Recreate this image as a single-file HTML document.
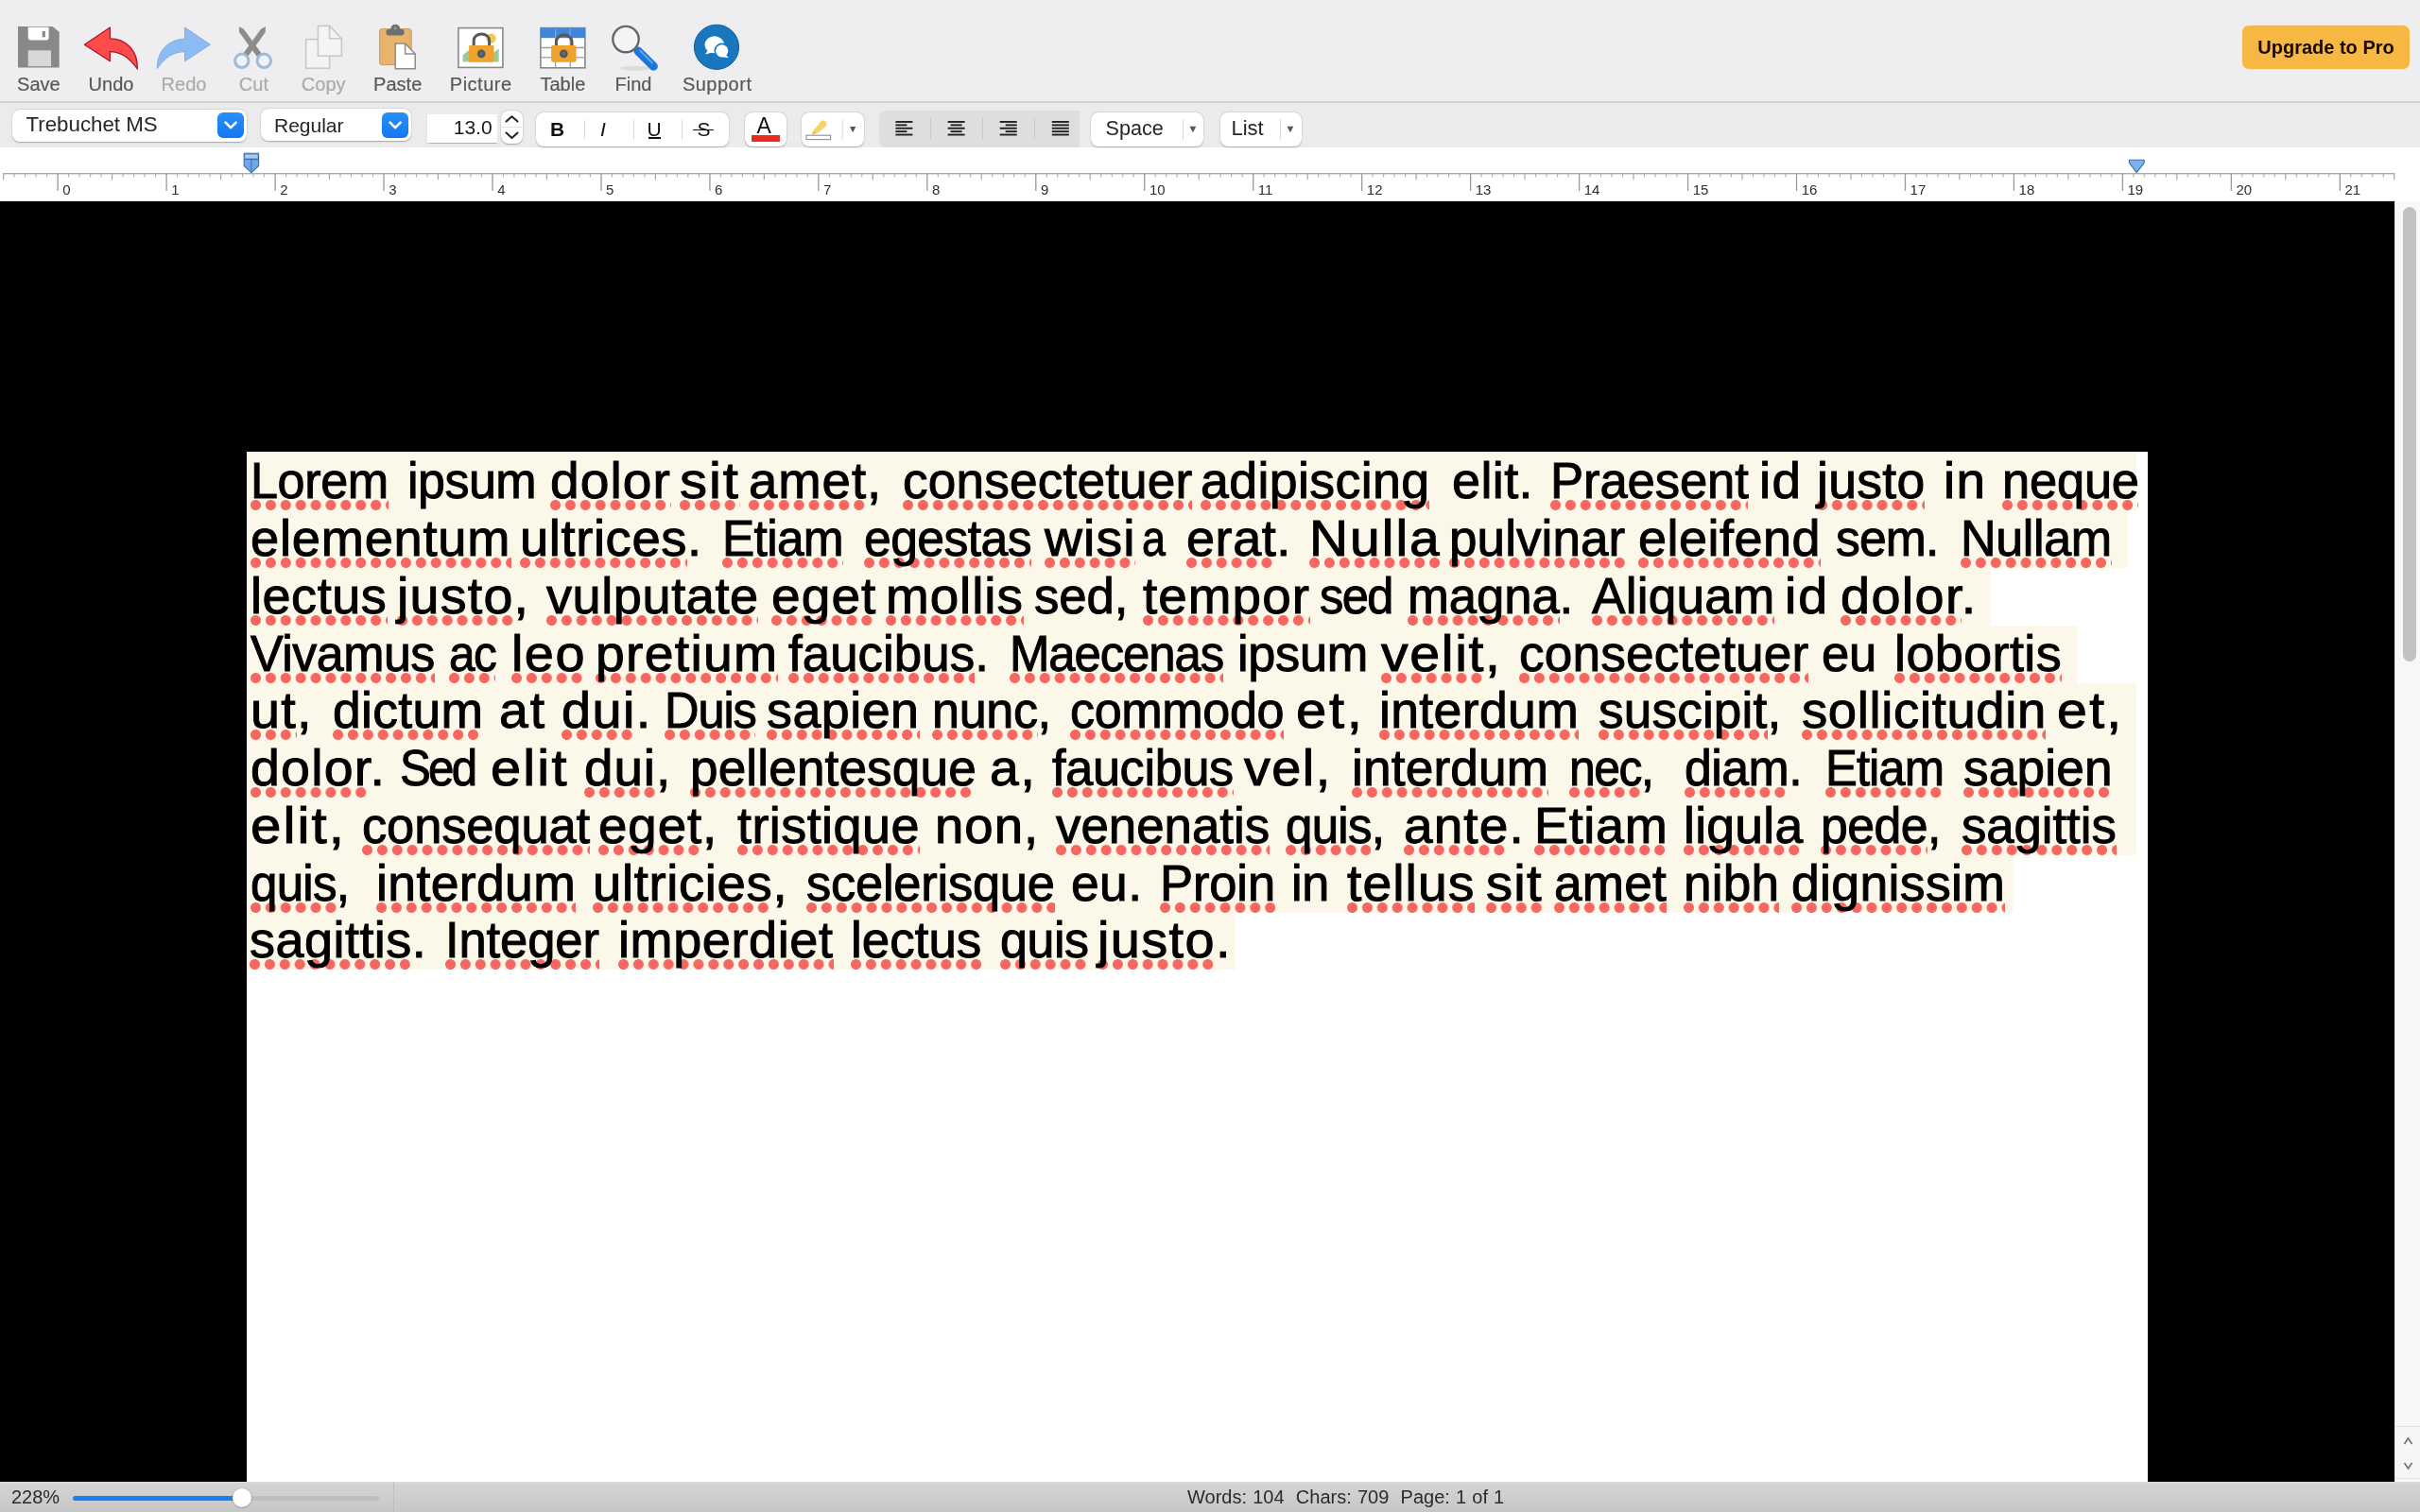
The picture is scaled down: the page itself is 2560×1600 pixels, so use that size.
<!DOCTYPE html>
<html><head><meta charset="utf-8">
<style>
*{box-sizing:border-box;margin:0;padding:0}
html,body{width:2560px;height:1600px;overflow:hidden;background:#000;font-family:"Liberation Sans",sans-serif;position:relative}
.abs{position:absolute}
#tb{position:absolute;left:0;top:0;width:2560px;height:107px;background:#EEEEF0}
#tbsep{position:absolute;left:0;top:107px;width:2560px;height:1.5px;background:#D2D2D4}
#fb{position:absolute;left:0;top:108.5px;width:2560px;height:47.5px;background:#EBEBEB}
#ruler{position:absolute;left:0;top:156px;width:2560px;height:57px;background:#fff}
#doc{position:absolute;left:0;top:213px;width:2533px;height:1355px;background:#000}
#page{position:absolute;left:261px;top:478px;width:2011px;height:1090px;background:#fff}
.hl{position:absolute;left:262px;height:60.78px;background:#FBF7E9}
.ln{position:absolute;left:0;width:2560px;height:61px;white-space:nowrap;font-size:52.8px;line-height:60.78px;color:#000;-webkit-text-stroke:1.0px #000}
.ln .m{position:relative}
.ln .m::after{content:"";position:absolute;left:0;right:0;top:50px;height:11px;mix-blend-mode:multiply;background:radial-gradient(circle at 5.5px 5.5px,#F96A68 0,#F96A68 5px,rgba(249,106,104,0) 5.9px) repeat-x 0 0;background-size:15.9px 11px}
#sb{position:absolute;left:2533px;top:213px;width:27px;height:1355px;background:#F8F8F8;border-left:1px solid #E4E4E4}
#sbthumb{position:absolute;left:7.5px;top:6px;width:14px;height:481px;border-radius:7px;background:#C2C2C2}
#sbarrows{position:absolute;left:0;top:1296px;width:26px;height:56px;border-top:1px solid #E2E2E2;border-bottom:1px solid #E2E2E2;background:#F6F6F6}
#status{position:absolute;left:0;top:1568px;width:2560px;height:32px;background:linear-gradient(#DCDCDC 0,#D3D3D3 3px,#C8C7C8 100%)}
.lbl{position:absolute;top:77px;font-size:20px;color:#585858;-webkit-text-stroke:0.2px currentColor;text-align:center;width:120px;line-height:24px;white-space:nowrap}
.dis{color:#ABABAB}
.pop{position:absolute;background:#fff;border-radius:8px;box-shadow:0 0.5px 1.5px rgba(0,0,0,0.28),0 0 0 0.5px rgba(0,0,0,0.06)}
.bbtn{position:absolute;border-radius:6px;background:linear-gradient(#2A8FF9,#1377F0)}
.ptxt{position:absolute;font-size:21px;color:#262626;white-space:nowrap;line-height:24px}
.div{position:absolute;width:1px;background:#D9D9D9}
.w{position:absolute;top:0}
.w{transform-origin:0 0}
.dots{position:absolute;top:50px;height:11px;mix-blend-mode:multiply;background:radial-gradient(circle at 5.5px 5.5px,#F96A68 0,#F96A68 5px,rgba(249,106,104,0) 5.9px) repeat-x 0 0;background-size:15.9px 11px}

</style></head><body>
<div id="tb"></div>
<div id="tbsep"></div>
<div id="fb"></div>
<div id="ruler"></div>
<div id="doc"></div>
<div id="page"></div>
<div class="hl" style="top:479.40px;width:1998.0px"></div><div class="hl" style="top:540.18px;width:1989.0px"></div><div class="hl" style="top:600.96px;width:1844.0px"></div><div class="hl" style="top:661.74px;width:1935.6px"></div><div class="hl" style="top:722.52px;width:1998.0px"></div><div class="hl" style="top:783.30px;width:1998.0px"></div><div class="hl" style="top:844.08px;width:1998.0px"></div><div class="hl" style="top:904.86px;width:1867.6px"></div><div class="hl" style="top:965.64px;width:1044.6px"></div><div class="ln" style="top:479.22px"><span class="w" style="left:265.4px;transform:scaleX(0.9870);letter-spacing:-0.39px">Lorem</span><i class="dots" style="left:265.4px;width:145.8px"></i><span class="w" style="left:430.5px;transform:scaleX(0.9847);letter-spacing:-0.52px">ipsum</span><span class="w" style="left:582.3px;transform:scaleX(1.0437);letter-spacing:1.03px">dolor</span><i class="dots" style="left:582.3px;width:127.9px"></i><span class="w" style="left:719.2px;transform:scaleX(1.1000);letter-spacing:1.76px">sit</span><i class="dots" style="left:719.2px;width:63.9px"></i><span class="w" style="left:792.0px;transform:scaleX(1.0319);letter-spacing:0.94px">amet,</span><i class="dots" style="left:792.0px;width:125.0px"></i><span class="w" style="left:954.5px;transform:scaleX(1.0069);letter-spacing:0.17px">consectetuer</span><i class="dots" style="left:954.5px;width:306.5px"></i><span class="w" style="left:1270.0px;transform:scaleX(1.0160);letter-spacing:0.38px">adipiscing</span><i class="dots" style="left:1270.0px;width:242.4px"></i><span class="w" style="left:1535.7px;transform:scaleX(1.0215);letter-spacing:0.41px">elit.</span><span class="w" style="left:1639.5px;transform:scaleX(0.9961);letter-spacing:-0.10px">Praesent</span><i class="dots" style="left:1639.5px;width:209.7px"></i><span class="w" style="left:1861.3px;transform:scaleX(1.0379);letter-spacing:1.32px">id</span><span class="w" style="left:1921.6px;transform:scaleX(1.0137);letter-spacing:0.30px">justo</span><i class="dots" style="left:1921.6px;width:114.6px"></i><span class="w" style="left:2055.9px;transform:scaleX(1.0379);letter-spacing:1.32px">in</span><span class="w" style="left:2117.7px;transform:scaleX(0.9931);letter-spacing:-0.20px">neque</span><i class="dots" style="left:2117.7px;width:144.8px"></i></div><div class="ln" style="top:540.00px"><span class="w" style="left:265.4px;transform:scaleX(1.0265);letter-spacing:0.77px">elementum</span><i class="dots" style="left:265.4px;width:275.2px"></i><span class="w" style="left:549.6px;transform:scaleX(1.0288);letter-spacing:0.60px">ultrices.</span><i class="dots" style="left:549.6px;width:177.0px"></i><span class="w" style="left:763.8px;transform:scaleX(0.9735);letter-spacing:-0.72px">Etiam</span><i class="dots" style="left:763.8px;width:127.9px"></i><span class="w" style="left:914.4px;transform:scaleX(0.9783);letter-spacing:-0.57px">egestas</span><i class="dots" style="left:914.4px;width:177.0px"></i><span class="w" style="left:1104.8px;transform:scaleX(1.0483);letter-spacing:1.06px">wisi</span><i class="dots" style="left:1104.8px;width:96.7px"></i><span class="w" style="left:1208.4px;transform:scaleX(0.8500);letter-spacing:0.00px">a</span><span class="w" style="left:1255.0px;transform:scaleX(1.0234);letter-spacing:0.53px">erat.</span><i class="dots" style="left:1255.0px;width:95.3px"></i><span class="w" style="left:1384.5px;transform:scaleX(1.0779);letter-spacing:1.87px">Nulla</span><i class="dots" style="left:1384.5px;width:139.8px"></i><span class="w" style="left:1533.2px;transform:scaleX(1.0038);letter-spacing:0.09px">pulvinar</span><i class="dots" style="left:1533.2px;width:186.3px"></i><span class="w" style="left:1733.0px;transform:scaleX(1.0218);letter-spacing:0.50px">eleifend</span><i class="dots" style="left:1733.0px;width:193.1px"></i><span class="w" style="left:1941.7px;transform:scaleX(0.9773);letter-spacing:-0.83px">sem.</span><span class="w" style="left:2074.0px;transform:scaleX(0.9862);letter-spacing:-0.38px">Nullam</span><i class="dots" style="left:2074.0px;width:159.8px"></i></div><div class="ln" style="top:600.78px"><span class="w" style="left:265.4px;transform:scaleX(1.0229);letter-spacing:0.53px">lectus</span><i class="dots" style="left:265.4px;width:144.3px"></i><span class="w" style="left:420.1px;transform:scaleX(1.0523);letter-spacing:1.17px">justo,</span><i class="dots" style="left:420.1px;width:123.5px"></i><span class="w" style="left:577.8px;transform:scaleX(1.0240);letter-spacing:0.57px">vulputate</span><i class="dots" style="left:577.8px;width:224.7px"></i><span class="w" style="left:815.9px;transform:scaleX(1.0416);letter-spacing:1.07px">eget</span><i class="dots" style="left:815.9px;width:111.5px"></i><span class="w" style="left:937.2px;transform:scaleX(1.0395);letter-spacing:0.89px">mollis</span><i class="dots" style="left:937.2px;width:145.8px"></i><span class="w" style="left:1093.9px;transform:scaleX(0.9984);letter-spacing:-0.05px">sed,</span><span class="w" style="left:1209.4px;transform:scaleX(1.0381);letter-spacing:1.04px">tempor</span><i class="dots" style="left:1209.4px;width:177.1px"></i><span class="w" style="left:1395.9px;transform:scaleX(0.9584);letter-spacing:-1.69px">sed</span><span class="w" style="left:1489.1px;transform:scaleX(0.9974);letter-spacing:-0.08px">magna.</span><i class="dots" style="left:1489.1px;width:160.6px"></i><span class="w" style="left:1683.9px;transform:scaleX(1.0069);letter-spacing:0.19px">Aliquam</span><i class="dots" style="left:1683.9px;width:193.4px"></i><span class="w" style="left:1887.7px;transform:scaleX(1.0502);letter-spacing:1.76px">id</span><span class="w" style="left:1947.2px;transform:scaleX(1.0569);letter-spacing:1.30px">dolor.</span><i class="dots" style="left:1947.2px;width:127.9px"></i></div><div class="ln" style="top:661.56px"><span class="w" style="left:265.4px;transform:scaleX(0.9835);letter-spacing:-0.48px">Vivamus</span><i class="dots" style="left:265.4px;width:194.9px"></i><span class="w" style="left:475.2px;transform:scaleX(0.9383);letter-spacing:-1.72px">ac</span><i class="dots" style="left:475.2px;width:49.1px"></i><span class="w" style="left:540.6px;transform:scaleX(1.0581);letter-spacing:1.37px">leo</span><i class="dots" style="left:540.6px;width:78.9px"></i><span class="w" style="left:629.9px;transform:scaleX(1.0481);letter-spacing:1.21px">pretium</span><i class="dots" style="left:629.9px;width:193.4px"></i><span class="w" style="left:833.7px;transform:scaleX(1.0014);letter-spacing:0.03px">faucibus.</span><i class="dots" style="left:833.7px;width:197.2px"></i><span class="w" style="left:1068.1px;transform:scaleX(0.9634);letter-spacing:-1.11px">Maecenas</span><i class="dots" style="left:1068.1px;width:226.1px"></i><span class="w" style="left:1309.0px;transform:scaleX(0.9907);letter-spacing:-0.31px">ipsum</span><span class="w" style="left:1460.9px;transform:scaleX(1.0829);letter-spacing:1.56px">velit,</span><i class="dots" style="left:1460.9px;width:110.1px"></i><span class="w" style="left:1606.5px;transform:scaleX(1.0069);letter-spacing:0.17px">consectetuer</span><i class="dots" style="left:1606.5px;width:306.5px"></i><span class="w" style="left:1927.3px;transform:scaleX(0.9963);letter-spacing:-0.20px">eu</span><span class="w" style="left:2003.7px;transform:scaleX(1.0201);letter-spacing:0.43px">lobortis</span><i class="dots" style="left:2003.7px;width:177.1px"></i></div><div class="ln" style="top:722.34px"><span class="w" style="left:265.4px;transform:scaleX(1.0558);letter-spacing:1.23px">ut,</span><i class="dots" style="left:265.4px;width:49.1px"></i><span class="w" style="left:351.7px;transform:scaleX(1.0118);letter-spacing:0.31px">dictum</span><i class="dots" style="left:351.7px;width:159.2px"></i><span class="w" style="left:528.2px;transform:scaleX(1.0477);letter-spacing:2.00px">at</span><span class="w" style="left:594.2px;transform:scaleX(1.0575);letter-spacing:1.35px">dui.</span><i class="dots" style="left:594.2px;width:78.8px"></i><span class="w" style="left:702.8px;transform:scaleX(0.9568);letter-spacing:-1.14px">Duis</span><i class="dots" style="left:702.8px;width:96.7px"></i><span class="w" style="left:811.4px;transform:scaleX(1.0188);letter-spacing:0.49px">sapien</span><i class="dots" style="left:811.4px;width:161.5px"></i><span class="w" style="left:986.3px;transform:scaleX(0.9873);letter-spacing:-0.36px">nunc,</span><i class="dots" style="left:986.3px;width:111.6px"></i><span class="w" style="left:1132.1px;transform:scaleX(0.9876);letter-spacing:-0.41px">commodo</span><i class="dots" style="left:1132.1px;width:226.1px"></i><span class="w" style="left:1371.1px;transform:scaleX(1.0954);letter-spacing:2.48px">et,</span><span class="w" style="left:1459.4px;transform:scaleX(1.0137);letter-spacing:0.35px">interdum</span><i class="dots" style="left:1459.4px;width:211.1px"></i><span class="w" style="left:1691.3px;transform:scaleX(1.0069);letter-spacing:0.15px">suscipit,</span><i class="dots" style="left:1691.3px;width:178.5px"></i><span class="w" style="left:1905.5px;transform:scaleX(1.0310);letter-spacing:0.63px">sollicitudin</span><i class="dots" style="left:1905.5px;width:258.9px"></i><span class="w" style="left:2175.8px;transform:scaleX(1.0831);letter-spacing:2.16px">et,</span></div><div class="ln" style="top:783.12px"><span class="w" style="left:265.4px;transform:scaleX(1.0511);letter-spacing:1.17px">dolor.</span><i class="dots" style="left:265.4px;width:126.5px"></i><span class="w" style="left:422.6px;transform:scaleX(0.9326);letter-spacing:-3.00px">Sed</span><span class="w" style="left:519.3px;transform:scaleX(1.0927);letter-spacing:2.04px">elit</span><span class="w" style="left:618.0px;transform:scaleX(1.0378);letter-spacing:0.89px">dui,</span><i class="dots" style="left:618.0px;width:75.9px"></i><span class="w" style="left:729.6px;transform:scaleX(1.0056);letter-spacing:0.14px">pellentesque</span><i class="dots" style="left:729.6px;width:302.8px"></i><span class="w" style="left:1046.8px;transform:scaleX(1.0463);letter-spacing:1.76px">a,</span><span class="w" style="left:1112.7px;transform:scaleX(0.9878);letter-spacing:-0.30px">faucibus</span><i class="dots" style="left:1112.7px;width:191.9px"></i><span class="w" style="left:1316.0px;transform:scaleX(1.0549);letter-spacing:1.43px">vel,</span><span class="w" style="left:1429.6px;transform:scaleX(1.0067);letter-spacing:0.17px">interdum</span><i class="dots" style="left:1429.6px;width:208.2px"></i><span class="w" style="left:1660.1px;transform:scaleX(0.9443);letter-spacing:-1.58px">nec,</span><i class="dots" style="left:1660.1px;width:75.9px"></i><span class="w" style="left:1782.0px;transform:scaleX(0.9813);letter-spacing:-0.53px">diam.</span><i class="dots" style="left:1782.0px;width:110.2px"></i><span class="w" style="left:1930.8px;transform:scaleX(0.9624);letter-spacing:-1.02px">Etiam</span><i class="dots" style="left:1930.8px;width:125.0px"></i><span class="w" style="left:2076.6px;transform:scaleX(1.0067);letter-spacing:0.17px">sapien</span><i class="dots" style="left:2076.6px;width:157.7px"></i></div><div class="ln" style="top:843.90px"><span class="w" style="left:264.9px;transform:scaleX(1.1014);letter-spacing:1.93px">elit,</span><span class="w" style="left:383.0px;transform:scaleX(0.9945);letter-spacing:-0.15px">consequat</span><i class="dots" style="left:383.0px;width:241.0px"></i><span class="w" style="left:632.9px;transform:scaleX(1.0351);letter-spacing:0.90px">eget,</span><i class="dots" style="left:632.9px;width:110.1px"></i><span class="w" style="left:780.1px;transform:scaleX(1.0212);letter-spacing:0.44px">tristique</span><i class="dots" style="left:780.1px;width:192.8px"></i><span class="w" style="left:989.2px;transform:scaleX(1.0321);letter-spacing:1.02px">non,</span><span class="w" style="left:1117.2px;transform:scaleX(1.0002);letter-spacing:0.00px">venenatis</span><i class="dots" style="left:1117.2px;width:226.1px"></i><span class="w" style="left:1359.7px;transform:scaleX(0.9677);letter-spacing:-0.78px">quis,</span><i class="dots" style="left:1359.7px;width:90.7px"></i><span class="w" style="left:1484.6px;transform:scaleX(1.0412);letter-spacing:1.06px">ante.</span><i class="dots" style="left:1484.6px;width:111.4px"></i><span class="w" style="left:1622.9px;transform:scaleX(1.0232);letter-spacing:0.63px">Etiam</span><i class="dots" style="left:1622.9px;width:141.3px"></i><span class="w" style="left:1780.6px;transform:scaleX(1.0126);letter-spacing:0.26px">ligula</span><i class="dots" style="left:1780.6px;width:126.4px"></i><span class="w" style="left:1926.4px;transform:scaleX(0.9809);letter-spacing:-0.56px">pede,</span><i class="dots" style="left:1926.4px;width:113.0px"></i><span class="w" style="left:2075.1px;transform:scaleX(0.9981);letter-spacing:-0.04px">sagittis</span><i class="dots" style="left:2075.1px;width:163.7px"></i></div><div class="ln" style="top:904.68px"><span class="w" style="left:265.4px;transform:scaleX(0.9682);letter-spacing:-0.77px">quis,</span><i class="dots" style="left:265.4px;width:90.8px"></i><span class="w" style="left:397.8px;transform:scaleX(1.0140);letter-spacing:0.36px">interdum</span><i class="dots" style="left:397.8px;width:211.2px"></i><span class="w" style="left:626.9px;transform:scaleX(1.0314);letter-spacing:0.63px">ultricies,</span><i class="dots" style="left:626.9px;width:190.4px"></i><span class="w" style="left:853.0px;transform:scaleX(0.9918);letter-spacing:-0.20px">scelerisque</span><i class="dots" style="left:853.0px;width:262.7px"></i><span class="w" style="left:1133.0px;transform:scaleX(1.0111);letter-spacing:0.37px">eu.</span><span class="w" style="left:1227.3px;transform:scaleX(0.9949);letter-spacing:-0.13px">Proin</span><i class="dots" style="left:1227.3px;width:122.0px"></i><span class="w" style="left:1365.6px;transform:scaleX(0.9885);letter-spacing:-0.40px">in</span><span class="w" style="left:1425.1px;transform:scaleX(1.0481);letter-spacing:0.99px">tellus</span><i class="dots" style="left:1425.1px;width:135.4px"></i><span class="w" style="left:1572.0px;transform:scaleX(1.0641);letter-spacing:1.13px">sit</span><i class="dots" style="left:1572.0px;width:59.8px"></i><span class="w" style="left:1643.7px;transform:scaleX(1.0068);letter-spacing:0.20px">amet</span><i class="dots" style="left:1643.7px;width:119.0px"></i><span class="w" style="left:1780.6px;transform:scaleX(1.0064);letter-spacing:0.16px">nibh</span><i class="dots" style="left:1780.6px;width:101.1px"></i><span class="w" style="left:1895.1px;transform:scaleX(1.0138);letter-spacing:0.34px">dignissim</span><i class="dots" style="left:1895.1px;width:226.2px"></i></div><div class="ln" style="top:965.46px"><span class="w" style="left:263.9px;transform:scaleX(1.0225);letter-spacing:0.46px">sagittis.</span><i class="dots" style="left:263.9px;width:171.8px"></i><span class="w" style="left:471.4px;transform:scaleX(0.9955);letter-spacing:-0.11px">Integer</span><i class="dots" style="left:471.4px;width:162.9px"></i><span class="w" style="left:654.4px;transform:scaleX(1.0238);letter-spacing:0.57px">imperdiet</span><i class="dots" style="left:654.4px;width:227.6px"></i><span class="w" style="left:899.8px;transform:scaleX(1.0014);letter-spacing:0.03px">lectus</span><i class="dots" style="left:899.8px;width:138.3px"></i><span class="w" style="left:1058.2px;transform:scaleX(0.9836);letter-spacing:-0.40px">quis</span><i class="dots" style="left:1058.2px;width:93.7px"></i><span class="w" style="left:1160.8px;transform:scaleX(1.0587);letter-spacing:1.31px">justo.</span><i class="dots" style="left:1160.8px;width:125.0px"></i></div>
<svg class="abs" style="left:0;top:0" width="820" height="107" viewBox="0 0 820 107">
 <!-- Save -->
 <path d="M19,28 H55.7 L62.7,34 V71.5 H19 Z" fill="#898989"/>
 <path d="M29.7,28.7 H51.6 V39.6 Q51.6,42.6 48.6,42.6 H32.7 Q29.7,42.6 29.7,39.6 Z" fill="#fff"/>
 <rect x="44.7" y="33" width="3.2" height="6.4" fill="#898989"/>
 <rect x="29.7" y="53.3" width="24.3" height="16.9" fill="#D8D8D8"/>
 <!-- Undo -->
 <path d="M89.4,47.2 L116.4,29 L116.4,40.8 C133,41 146,53 145.3,73 C137,61 128,54.7 116.4,54.7 L116.4,64.8 Z" fill="#FF4B4B" stroke="#A8182A" stroke-width="1.3" stroke-linejoin="round"/>
 <!-- Redo -->
 <path d="M222.4,47.2 L195.5,29 L195.5,41.2 C179,41.4 166,53 166.3,72.6 C174,61 183.5,54.7 195.5,54.7 L195.5,64.8 Z" fill="#8DBCF2" stroke="#80AEE2" stroke-width="1" stroke-linejoin="round"/>
 <!-- Cut -->
 <path d="M252.8,28.2 L257.6,30.6 L277.6,57.8 L272.8,61.2 L253.2,34.2 Z" fill="#8C8C8C"/>
 <path d="M281,28.2 L276.2,30.6 L256.4,57.8 L261.2,61.2 L280.6,34.2 Z" fill="#8C8C8C"/>
 <circle cx="255.8" cy="64.3" r="7.2" fill="#F2F2F4" stroke="#9EBBDA" stroke-width="3"/>
 <circle cx="279.3" cy="64.3" r="7.2" fill="#F2F2F4" stroke="#9EBBDA" stroke-width="3"/>
 <!-- Copy -->
 <rect x="323.6" y="41.6" width="25" height="30.6" fill="#F4F4F5" stroke="#C8C8C8" stroke-width="1.6"/>
 <path d="M336.4,27.4 H348.6 L361.4,40.8 V59.3 H336.4 Z" fill="#F4F4F5" stroke="#C8C8C8" stroke-width="1.6" stroke-linejoin="miter"/>
 <path d="M348.6,27.4 V40.8 H361.4" fill="none" stroke="#C8C8C8" stroke-width="1.6"/>
 <!-- Paste -->
 <rect x="401.6" y="30.6" width="33.6" height="38" rx="2.5" fill="#E8B46C" stroke="#C69A5C" stroke-width="1"/>
 <circle cx="418.3" cy="30.8" r="5" fill="#6E6E6E"/>
 <rect x="408.4" y="31" width="19.2" height="6.4" rx="3" fill="#6E6E6E"/>
 <circle cx="418.3" cy="29.8" r="1.6" fill="#9A9A9A"/>
 <path d="M418.2,46 H428.6 L439.2,57 V72.7 H418.2 Z" fill="#fff" stroke="#8C8C8C" stroke-width="1.5"/>
 <path d="M428.6,46 V57 H439.2" fill="none" stroke="#8C8C8C" stroke-width="1.5"/>
 <!-- Picture -->
 <rect x="484.9" y="29.6" width="47" height="41.8" fill="#fff" stroke="#898989" stroke-width="1.6"/>
 <circle cx="519.5" cy="40.6" r="5.2" fill="#EFCB55"/>
 <path d="M489.6,65.4 V58 L497,52.5 L504,57 L522,56 L527.6,51.3 V65.4 Z" fill="#9ACA98"/>
 <path d="M501.2,48.5 V43 A8.1,7 0 0 1 517.6,43 V48.5" fill="none" stroke="#585858" stroke-width="3"/>
 <rect x="496.1" y="47.9" width="26.4" height="17.9" rx="1" fill="#F0A22E"/>
 <circle cx="509.2" cy="56.8" r="4.4" fill="#585858"/>
 <circle cx="509.2" cy="56.8" r="2" fill="#4B6E90"/>
 <!-- Table -->
 <rect x="571.9" y="29.6" width="47" height="42.2" fill="#fff" stroke="#898989" stroke-width="1.6"/>
 <rect x="571.9" y="29.6" width="47" height="10.6" fill="#3F87D8"/>
 <path d="M572,50.5 H618.8 M572,60.9 H618.8 M587.6,40.2 V71.5 M603.2,40.2 V71.5" stroke="#9C9C9C" stroke-width="1.3"/>
 <path d="M587.6,30.4 V40 M603.2,30.4 V40" stroke="#7FA9DC" stroke-width="1.2"/>
 <path d="M588.4,48.5 V44 A8.3,7 0 0 1 605,44 V48.5" fill="none" stroke="#585858" stroke-width="3"/>
 <rect x="583.1" y="47.9" width="26.5" height="17.9" rx="2" fill="#F0A22E"/>
 <circle cx="596.3" cy="56.8" r="4.4" fill="#585858"/>
 <circle cx="596.3" cy="56.8" r="2" fill="#4B6E90"/>
 <!-- Find -->
 <ellipse cx="673" cy="72.3" rx="17" ry="2.4" fill="#000" opacity="0.08"/>
 <line x1="675" y1="54" x2="691.4" y2="70.2" stroke="#1B77E0" stroke-width="9" stroke-linecap="round"/>
 <line x1="677" y1="53.5" x2="690" y2="66.5" stroke="#6FB3F5" stroke-width="2" stroke-linecap="round" opacity="0.8"/>
 <circle cx="662" cy="41.6" r="13.7" fill="#F4F4F7" stroke="#666" stroke-width="2.4"/>
 <!-- Support -->
 <circle cx="758" cy="49.8" r="23.6" fill="#1877BE" stroke="#0F5E9B" stroke-width="1"/>
 <ellipse cx="755.8" cy="47.3" rx="10.3" ry="9" fill="#fff"/>
 <path d="M748.6,53.5 L746,57.6 L753.5,55.6 Z" fill="#fff"/>
 <circle cx="763.7" cy="53.8" r="8.2" fill="#1877BE"/>
 <circle cx="763.7" cy="53.8" r="6.6" fill="#fff"/>
 <path d="M767.8,58 L770.9,61.2 L764.2,60.2 Z" fill="#fff"/>
</svg>
<div class="lbl" style="left:-19.1px">Save</div>
<div class="lbl" style="left:57.5px">Undo</div>
<div class="lbl dis" style="left:134.5px">Redo</div>
<div class="lbl dis" style="left:208.4px">Cut</div>
<div class="lbl dis" style="left:282.2px">Copy</div>
<div class="lbl" style="left:360.7px">Paste</div>
<div class="lbl" style="left:448.7px;letter-spacing:0.5px">Picture</div>
<div class="lbl" style="left:535.4px">Table</div>
<div class="lbl" style="left:610px">Find</div>
<div class="lbl" style="left:698.7px;letter-spacing:0.5px">Support</div>
<div class="abs" style="left:2372px;top:27px;width:177px;height:45.5px;border-radius:7px;background:#F6B843;box-shadow:0 0 0 1px rgba(255,230,180,0.7);font-weight:700;font-size:20px;line-height:47.5px;text-align:center;color:#1A0800">Upgrade to Pro</div>

<div class="pop" style="left:12.5px;top:115.5px;width:248.2px;height:34.2px"></div>
<div class="bbtn" style="left:229.5px;top:119px;width:28.3px;height:27px"></div>
<svg class="abs" style="left:229.5px;top:119px" width="29" height="27"><path d="M8.6,10.6 L14.1,16.2 L19.6,10.6" fill="none" stroke="#fff" stroke-width="2.6" stroke-linecap="round" stroke-linejoin="round"/></svg>
<div class="ptxt" style="left:27.5px;top:120px;font-size:22.3px">Trebuchet MS</div>

<div class="pop" style="left:276px;top:115.4px;width:159px;height:34.1px"></div>
<div class="bbtn" style="left:403.6px;top:119.2px;width:28.2px;height:26.6px"></div>
<svg class="abs" style="left:403.6px;top:119.2px" width="29" height="27"><path d="M8.6,10.6 L14.1,16.2 L19.6,10.6" fill="none" stroke="#fff" stroke-width="2.6" stroke-linecap="round" stroke-linejoin="round"/></svg>
<div class="ptxt" style="left:290px;top:120.5px">Regular</div>

<div class="abs" style="left:451.6px;top:121px;width:74.4px;height:30.4px;background:#fff;box-shadow:0 0.5px 1px rgba(0,0,0,0.25)"></div>
<div class="ptxt" style="left:451.6px;top:122.5px;width:69px;text-align:right;color:#1A1A1A">13.0</div>
<div class="pop" style="left:529.7px;top:116.7px;width:23px;height:35.3px"></div>
<div class="abs" style="left:530px;top:134px;width:22.4px;height:1px;background:#E2E2E2"></div>
<svg class="abs" style="left:529.7px;top:116.7px" width="23" height="36"><path d="M5.5,11.6 L11.5,6.2 L17.5,11.6" fill="none" stroke="#222" stroke-width="2" stroke-linecap="round" stroke-linejoin="round"/><path d="M5.5,23.5 L11.5,29 L17.5,23.5" fill="none" stroke="#222" stroke-width="2" stroke-linecap="round" stroke-linejoin="round"/></svg>

<div class="pop" style="left:567.1px;top:119px;width:204.1px;height:35.8px"></div>
<div class="div" style="left:617.8px;top:126.8px;height:20.5px"></div>
<div class="div" style="left:669.5px;top:126.8px;height:20.5px"></div>
<div class="div" style="left:720.5px;top:126.8px;height:20.5px"></div>
<div class="ptxt" style="left:582px;top:125px;font-weight:700;font-size:21px;color:#111">B</div>
<div class="ptxt" style="left:635px;top:125px;font-style:italic;font-size:21px;color:#111">I</div>
<div class="ptxt" style="left:684.5px;top:125px;font-size:21px;color:#111">U</div>
<div class="abs" style="left:685.6px;top:145px;width:13.6px;height:1.6px;background:#111"></div>
<div class="ptxt" style="left:737.5px;top:125px;font-size:21px;color:#111">S</div>
<div class="abs" style="left:732.7px;top:136.5px;width:22.8px;height:1.8px;background:#111"></div>

<div class="pop" style="left:787.7px;top:119px;width:44px;height:35.8px"></div>
<div class="ptxt" style="left:800.5px;top:120.5px;font-size:23px;color:#111">A</div>
<div class="abs" style="left:794.8px;top:143.3px;width:30.2px;height:6.3px;background:#EC2A1F"></div>

<div class="pop" style="left:848.2px;top:119px;width:65.9px;height:35.8px"></div>
<svg class="abs" style="left:848.2px;top:119px" width="66" height="36">
 <path d="M12.5,19 L20.5,9.5 Q22.5,7.2 24.5,9 L26,10.5 Q27.5,12.5 25.5,14.5 L17,22 Z" fill="#F6D465"/>
 <path d="M12.5,19 L17,22 L10.5,23.5 Z" fill="#E7C15A"/>
 <rect x="5" y="24.2" width="25.6" height="4.4" fill="#fff" stroke="#8E8E8E" stroke-width="1.1"/>
 <rect x="42.7" y="7.5" width="1" height="21" fill="#DADADA"/>
 <path d="M51,14.9 L57.3,14.9 L54.15,21.2 Z" fill="#555"/>
</svg>

<div class="abs" style="left:930.3px;top:117.1px;width:211.4px;height:38.8px;background:#DEDEDE;border-radius:8px 0 0 8px"></div>
<div class="div" style="left:984px;top:125px;height:22px;background:#CACACA"></div>
<div class="div" style="left:1039px;top:125px;height:22px;background:#CACACA"></div>
<div class="div" style="left:1093.8px;top:125px;height:22px;background:#CACACA"></div>
<svg class="abs" style="left:930px;top:117px" width="212" height="39">
 <g fill="#222"><rect x="17.4" y="11" width="18" height="1.9"/><rect x="17.4" y="14.4" width="12" height="1.9"/><rect x="17.4" y="17.8" width="18" height="1.9"/><rect x="17.4" y="21.2" width="12" height="1.9"/><rect x="17.4" y="24.6" width="18" height="1.9"/><rect x="72.6" y="11" width="18" height="1.9"/><rect x="75.6" y="14.4" width="12" height="1.9"/><rect x="72.6" y="17.8" width="18" height="1.9"/><rect x="75.6" y="21.2" width="12" height="1.9"/><rect x="72.6" y="24.6" width="18" height="1.9"/><rect x="127.69999999999999" y="11" width="18" height="1.9"/><rect x="133.7" y="14.4" width="12" height="1.9"/><rect x="127.69999999999999" y="17.8" width="18" height="1.9"/><rect x="133.7" y="21.2" width="12" height="1.9"/><rect x="127.69999999999999" y="24.6" width="18" height="1.9"/><rect x="182.8" y="11" width="18" height="1.9"/><rect x="182.8" y="14.4" width="18" height="1.9"/><rect x="182.8" y="17.8" width="18" height="1.9"/><rect x="182.8" y="21.2" width="18" height="1.9"/><rect x="182.8" y="24.6" width="18" height="1.9"/></g>
</svg>

<div class="pop" style="left:1154px;top:119px;width:118.9px;height:35.6px"></div>
<div class="ptxt" style="left:1169.5px;top:124px;font-size:21.6px">Space</div>
<div class="div" style="left:1250.5px;top:126px;height:22px;background:#DADADA"></div>
<svg class="abs" style="left:1257px;top:132px" width="10" height="10"><path d="M1.5,1.7 L8.3,1.7 L4.9,8.3 Z" fill="#555"/></svg>

<div class="pop" style="left:1291px;top:119px;width:85.5px;height:35.6px"></div>
<div class="ptxt" style="left:1302.5px;top:124px;font-size:22px">List</div>
<div class="div" style="left:1353.7px;top:126px;height:22px;background:#DADADA"></div>
<svg class="abs" style="left:1360px;top:132px" width="10" height="10"><path d="M1.5,1.7 L8.3,1.7 L4.9,8.3 Z" fill="#555"/></svg>

<svg class="abs" style="left:0;top:156px" width="2560" height="57" viewBox="0 156 2560 57">
<rect x="3.6" y="183" width="2529.4" height="1.4" fill="#ABABAB"/>
<rect x="3.02" y="183" width="1.2" height="7.2" fill="#A6A6A6"/>
<rect x="14.52" y="183" width="1.2" height="4.3" fill="#B0B0B0"/>
<rect x="26.01" y="183" width="1.2" height="4.3" fill="#B0B0B0"/>
<rect x="37.51" y="183" width="1.2" height="4.3" fill="#B0B0B0"/>
<rect x="49.00" y="183" width="1.2" height="4.3" fill="#B0B0B0"/>
<rect x="60.50" y="183" width="1.3" height="19" fill="#9A9A9A"/>
<rect x="72.00" y="183" width="1.2" height="4.3" fill="#B0B0B0"/>
<rect x="83.49" y="183" width="1.2" height="4.3" fill="#B0B0B0"/>
<rect x="94.99" y="183" width="1.2" height="4.3" fill="#B0B0B0"/>
<rect x="106.48" y="183" width="1.2" height="4.3" fill="#B0B0B0"/>
<rect x="117.98" y="183" width="1.2" height="7.2" fill="#A6A6A6"/>
<rect x="129.48" y="183" width="1.2" height="4.3" fill="#B0B0B0"/>
<rect x="140.97" y="183" width="1.2" height="4.3" fill="#B0B0B0"/>
<rect x="152.47" y="183" width="1.2" height="4.3" fill="#B0B0B0"/>
<rect x="163.96" y="183" width="1.2" height="4.3" fill="#B0B0B0"/>
<rect x="175.46" y="183" width="1.3" height="19" fill="#9A9A9A"/>
<rect x="186.96" y="183" width="1.2" height="4.3" fill="#B0B0B0"/>
<rect x="198.45" y="183" width="1.2" height="4.3" fill="#B0B0B0"/>
<rect x="209.95" y="183" width="1.2" height="4.3" fill="#B0B0B0"/>
<rect x="221.44" y="183" width="1.2" height="4.3" fill="#B0B0B0"/>
<rect x="232.94" y="183" width="1.2" height="7.2" fill="#A6A6A6"/>
<rect x="244.44" y="183" width="1.2" height="4.3" fill="#B0B0B0"/>
<rect x="255.93" y="183" width="1.2" height="4.3" fill="#B0B0B0"/>
<rect x="267.43" y="183" width="1.2" height="4.3" fill="#B0B0B0"/>
<rect x="278.92" y="183" width="1.2" height="4.3" fill="#B0B0B0"/>
<rect x="290.42" y="183" width="1.3" height="19" fill="#9A9A9A"/>
<rect x="301.92" y="183" width="1.2" height="4.3" fill="#B0B0B0"/>
<rect x="313.41" y="183" width="1.2" height="4.3" fill="#B0B0B0"/>
<rect x="324.91" y="183" width="1.2" height="4.3" fill="#B0B0B0"/>
<rect x="336.40" y="183" width="1.2" height="4.3" fill="#B0B0B0"/>
<rect x="347.90" y="183" width="1.2" height="7.2" fill="#A6A6A6"/>
<rect x="359.40" y="183" width="1.2" height="4.3" fill="#B0B0B0"/>
<rect x="370.89" y="183" width="1.2" height="4.3" fill="#B0B0B0"/>
<rect x="382.39" y="183" width="1.2" height="4.3" fill="#B0B0B0"/>
<rect x="393.88" y="183" width="1.2" height="4.3" fill="#B0B0B0"/>
<rect x="405.38" y="183" width="1.3" height="19" fill="#9A9A9A"/>
<rect x="416.88" y="183" width="1.2" height="4.3" fill="#B0B0B0"/>
<rect x="428.37" y="183" width="1.2" height="4.3" fill="#B0B0B0"/>
<rect x="439.87" y="183" width="1.2" height="4.3" fill="#B0B0B0"/>
<rect x="451.36" y="183" width="1.2" height="4.3" fill="#B0B0B0"/>
<rect x="462.86" y="183" width="1.2" height="7.2" fill="#A6A6A6"/>
<rect x="474.36" y="183" width="1.2" height="4.3" fill="#B0B0B0"/>
<rect x="485.85" y="183" width="1.2" height="4.3" fill="#B0B0B0"/>
<rect x="497.35" y="183" width="1.2" height="4.3" fill="#B0B0B0"/>
<rect x="508.84" y="183" width="1.2" height="4.3" fill="#B0B0B0"/>
<rect x="520.34" y="183" width="1.3" height="19" fill="#9A9A9A"/>
<rect x="531.84" y="183" width="1.2" height="4.3" fill="#B0B0B0"/>
<rect x="543.33" y="183" width="1.2" height="4.3" fill="#B0B0B0"/>
<rect x="554.83" y="183" width="1.2" height="4.3" fill="#B0B0B0"/>
<rect x="566.32" y="183" width="1.2" height="4.3" fill="#B0B0B0"/>
<rect x="577.82" y="183" width="1.2" height="7.2" fill="#A6A6A6"/>
<rect x="589.32" y="183" width="1.2" height="4.3" fill="#B0B0B0"/>
<rect x="600.81" y="183" width="1.2" height="4.3" fill="#B0B0B0"/>
<rect x="612.31" y="183" width="1.2" height="4.3" fill="#B0B0B0"/>
<rect x="623.80" y="183" width="1.2" height="4.3" fill="#B0B0B0"/>
<rect x="635.30" y="183" width="1.3" height="19" fill="#9A9A9A"/>
<rect x="646.80" y="183" width="1.2" height="4.3" fill="#B0B0B0"/>
<rect x="658.29" y="183" width="1.2" height="4.3" fill="#B0B0B0"/>
<rect x="669.79" y="183" width="1.2" height="4.3" fill="#B0B0B0"/>
<rect x="681.28" y="183" width="1.2" height="4.3" fill="#B0B0B0"/>
<rect x="692.78" y="183" width="1.2" height="7.2" fill="#A6A6A6"/>
<rect x="704.28" y="183" width="1.2" height="4.3" fill="#B0B0B0"/>
<rect x="715.77" y="183" width="1.2" height="4.3" fill="#B0B0B0"/>
<rect x="727.27" y="183" width="1.2" height="4.3" fill="#B0B0B0"/>
<rect x="738.76" y="183" width="1.2" height="4.3" fill="#B0B0B0"/>
<rect x="750.26" y="183" width="1.3" height="19" fill="#9A9A9A"/>
<rect x="761.76" y="183" width="1.2" height="4.3" fill="#B0B0B0"/>
<rect x="773.25" y="183" width="1.2" height="4.3" fill="#B0B0B0"/>
<rect x="784.75" y="183" width="1.2" height="4.3" fill="#B0B0B0"/>
<rect x="796.24" y="183" width="1.2" height="4.3" fill="#B0B0B0"/>
<rect x="807.74" y="183" width="1.2" height="7.2" fill="#A6A6A6"/>
<rect x="819.24" y="183" width="1.2" height="4.3" fill="#B0B0B0"/>
<rect x="830.73" y="183" width="1.2" height="4.3" fill="#B0B0B0"/>
<rect x="842.23" y="183" width="1.2" height="4.3" fill="#B0B0B0"/>
<rect x="853.72" y="183" width="1.2" height="4.3" fill="#B0B0B0"/>
<rect x="865.22" y="183" width="1.3" height="19" fill="#9A9A9A"/>
<rect x="876.72" y="183" width="1.2" height="4.3" fill="#B0B0B0"/>
<rect x="888.21" y="183" width="1.2" height="4.3" fill="#B0B0B0"/>
<rect x="899.71" y="183" width="1.2" height="4.3" fill="#B0B0B0"/>
<rect x="911.20" y="183" width="1.2" height="4.3" fill="#B0B0B0"/>
<rect x="922.70" y="183" width="1.2" height="7.2" fill="#A6A6A6"/>
<rect x="934.20" y="183" width="1.2" height="4.3" fill="#B0B0B0"/>
<rect x="945.69" y="183" width="1.2" height="4.3" fill="#B0B0B0"/>
<rect x="957.19" y="183" width="1.2" height="4.3" fill="#B0B0B0"/>
<rect x="968.68" y="183" width="1.2" height="4.3" fill="#B0B0B0"/>
<rect x="980.18" y="183" width="1.3" height="19" fill="#9A9A9A"/>
<rect x="991.68" y="183" width="1.2" height="4.3" fill="#B0B0B0"/>
<rect x="1003.17" y="183" width="1.2" height="4.3" fill="#B0B0B0"/>
<rect x="1014.67" y="183" width="1.2" height="4.3" fill="#B0B0B0"/>
<rect x="1026.16" y="183" width="1.2" height="4.3" fill="#B0B0B0"/>
<rect x="1037.66" y="183" width="1.2" height="7.2" fill="#A6A6A6"/>
<rect x="1049.16" y="183" width="1.2" height="4.3" fill="#B0B0B0"/>
<rect x="1060.65" y="183" width="1.2" height="4.3" fill="#B0B0B0"/>
<rect x="1072.15" y="183" width="1.2" height="4.3" fill="#B0B0B0"/>
<rect x="1083.64" y="183" width="1.2" height="4.3" fill="#B0B0B0"/>
<rect x="1095.14" y="183" width="1.3" height="19" fill="#9A9A9A"/>
<rect x="1106.64" y="183" width="1.2" height="4.3" fill="#B0B0B0"/>
<rect x="1118.13" y="183" width="1.2" height="4.3" fill="#B0B0B0"/>
<rect x="1129.63" y="183" width="1.2" height="4.3" fill="#B0B0B0"/>
<rect x="1141.12" y="183" width="1.2" height="4.3" fill="#B0B0B0"/>
<rect x="1152.62" y="183" width="1.2" height="7.2" fill="#A6A6A6"/>
<rect x="1164.12" y="183" width="1.2" height="4.3" fill="#B0B0B0"/>
<rect x="1175.61" y="183" width="1.2" height="4.3" fill="#B0B0B0"/>
<rect x="1187.11" y="183" width="1.2" height="4.3" fill="#B0B0B0"/>
<rect x="1198.60" y="183" width="1.2" height="4.3" fill="#B0B0B0"/>
<rect x="1210.10" y="183" width="1.3" height="19" fill="#9A9A9A"/>
<rect x="1221.60" y="183" width="1.2" height="4.3" fill="#B0B0B0"/>
<rect x="1233.09" y="183" width="1.2" height="4.3" fill="#B0B0B0"/>
<rect x="1244.59" y="183" width="1.2" height="4.3" fill="#B0B0B0"/>
<rect x="1256.08" y="183" width="1.2" height="4.3" fill="#B0B0B0"/>
<rect x="1267.58" y="183" width="1.2" height="7.2" fill="#A6A6A6"/>
<rect x="1279.08" y="183" width="1.2" height="4.3" fill="#B0B0B0"/>
<rect x="1290.57" y="183" width="1.2" height="4.3" fill="#B0B0B0"/>
<rect x="1302.07" y="183" width="1.2" height="4.3" fill="#B0B0B0"/>
<rect x="1313.56" y="183" width="1.2" height="4.3" fill="#B0B0B0"/>
<rect x="1325.06" y="183" width="1.3" height="19" fill="#9A9A9A"/>
<rect x="1336.56" y="183" width="1.2" height="4.3" fill="#B0B0B0"/>
<rect x="1348.05" y="183" width="1.2" height="4.3" fill="#B0B0B0"/>
<rect x="1359.55" y="183" width="1.2" height="4.3" fill="#B0B0B0"/>
<rect x="1371.04" y="183" width="1.2" height="4.3" fill="#B0B0B0"/>
<rect x="1382.54" y="183" width="1.2" height="7.2" fill="#A6A6A6"/>
<rect x="1394.04" y="183" width="1.2" height="4.3" fill="#B0B0B0"/>
<rect x="1405.53" y="183" width="1.2" height="4.3" fill="#B0B0B0"/>
<rect x="1417.03" y="183" width="1.2" height="4.3" fill="#B0B0B0"/>
<rect x="1428.52" y="183" width="1.2" height="4.3" fill="#B0B0B0"/>
<rect x="1440.02" y="183" width="1.3" height="19" fill="#9A9A9A"/>
<rect x="1451.52" y="183" width="1.2" height="4.3" fill="#B0B0B0"/>
<rect x="1463.01" y="183" width="1.2" height="4.3" fill="#B0B0B0"/>
<rect x="1474.51" y="183" width="1.2" height="4.3" fill="#B0B0B0"/>
<rect x="1486.00" y="183" width="1.2" height="4.3" fill="#B0B0B0"/>
<rect x="1497.50" y="183" width="1.2" height="7.2" fill="#A6A6A6"/>
<rect x="1509.00" y="183" width="1.2" height="4.3" fill="#B0B0B0"/>
<rect x="1520.49" y="183" width="1.2" height="4.3" fill="#B0B0B0"/>
<rect x="1531.99" y="183" width="1.2" height="4.3" fill="#B0B0B0"/>
<rect x="1543.48" y="183" width="1.2" height="4.3" fill="#B0B0B0"/>
<rect x="1554.98" y="183" width="1.3" height="19" fill="#9A9A9A"/>
<rect x="1566.48" y="183" width="1.2" height="4.3" fill="#B0B0B0"/>
<rect x="1577.97" y="183" width="1.2" height="4.3" fill="#B0B0B0"/>
<rect x="1589.47" y="183" width="1.2" height="4.3" fill="#B0B0B0"/>
<rect x="1600.96" y="183" width="1.2" height="4.3" fill="#B0B0B0"/>
<rect x="1612.46" y="183" width="1.2" height="7.2" fill="#A6A6A6"/>
<rect x="1623.96" y="183" width="1.2" height="4.3" fill="#B0B0B0"/>
<rect x="1635.45" y="183" width="1.2" height="4.3" fill="#B0B0B0"/>
<rect x="1646.95" y="183" width="1.2" height="4.3" fill="#B0B0B0"/>
<rect x="1658.44" y="183" width="1.2" height="4.3" fill="#B0B0B0"/>
<rect x="1669.94" y="183" width="1.3" height="19" fill="#9A9A9A"/>
<rect x="1681.44" y="183" width="1.2" height="4.3" fill="#B0B0B0"/>
<rect x="1692.93" y="183" width="1.2" height="4.3" fill="#B0B0B0"/>
<rect x="1704.43" y="183" width="1.2" height="4.3" fill="#B0B0B0"/>
<rect x="1715.92" y="183" width="1.2" height="4.3" fill="#B0B0B0"/>
<rect x="1727.42" y="183" width="1.2" height="7.2" fill="#A6A6A6"/>
<rect x="1738.92" y="183" width="1.2" height="4.3" fill="#B0B0B0"/>
<rect x="1750.41" y="183" width="1.2" height="4.3" fill="#B0B0B0"/>
<rect x="1761.91" y="183" width="1.2" height="4.3" fill="#B0B0B0"/>
<rect x="1773.40" y="183" width="1.2" height="4.3" fill="#B0B0B0"/>
<rect x="1784.90" y="183" width="1.3" height="19" fill="#9A9A9A"/>
<rect x="1796.40" y="183" width="1.2" height="4.3" fill="#B0B0B0"/>
<rect x="1807.89" y="183" width="1.2" height="4.3" fill="#B0B0B0"/>
<rect x="1819.39" y="183" width="1.2" height="4.3" fill="#B0B0B0"/>
<rect x="1830.88" y="183" width="1.2" height="4.3" fill="#B0B0B0"/>
<rect x="1842.38" y="183" width="1.2" height="7.2" fill="#A6A6A6"/>
<rect x="1853.88" y="183" width="1.2" height="4.3" fill="#B0B0B0"/>
<rect x="1865.37" y="183" width="1.2" height="4.3" fill="#B0B0B0"/>
<rect x="1876.87" y="183" width="1.2" height="4.3" fill="#B0B0B0"/>
<rect x="1888.36" y="183" width="1.2" height="4.3" fill="#B0B0B0"/>
<rect x="1899.86" y="183" width="1.3" height="19" fill="#9A9A9A"/>
<rect x="1911.36" y="183" width="1.2" height="4.3" fill="#B0B0B0"/>
<rect x="1922.85" y="183" width="1.2" height="4.3" fill="#B0B0B0"/>
<rect x="1934.35" y="183" width="1.2" height="4.3" fill="#B0B0B0"/>
<rect x="1945.84" y="183" width="1.2" height="4.3" fill="#B0B0B0"/>
<rect x="1957.34" y="183" width="1.2" height="7.2" fill="#A6A6A6"/>
<rect x="1968.84" y="183" width="1.2" height="4.3" fill="#B0B0B0"/>
<rect x="1980.33" y="183" width="1.2" height="4.3" fill="#B0B0B0"/>
<rect x="1991.83" y="183" width="1.2" height="4.3" fill="#B0B0B0"/>
<rect x="2003.32" y="183" width="1.2" height="4.3" fill="#B0B0B0"/>
<rect x="2014.82" y="183" width="1.3" height="19" fill="#9A9A9A"/>
<rect x="2026.32" y="183" width="1.2" height="4.3" fill="#B0B0B0"/>
<rect x="2037.81" y="183" width="1.2" height="4.3" fill="#B0B0B0"/>
<rect x="2049.31" y="183" width="1.2" height="4.3" fill="#B0B0B0"/>
<rect x="2060.80" y="183" width="1.2" height="4.3" fill="#B0B0B0"/>
<rect x="2072.30" y="183" width="1.2" height="7.2" fill="#A6A6A6"/>
<rect x="2083.80" y="183" width="1.2" height="4.3" fill="#B0B0B0"/>
<rect x="2095.29" y="183" width="1.2" height="4.3" fill="#B0B0B0"/>
<rect x="2106.79" y="183" width="1.2" height="4.3" fill="#B0B0B0"/>
<rect x="2118.28" y="183" width="1.2" height="4.3" fill="#B0B0B0"/>
<rect x="2129.78" y="183" width="1.3" height="19" fill="#9A9A9A"/>
<rect x="2141.28" y="183" width="1.2" height="4.3" fill="#B0B0B0"/>
<rect x="2152.77" y="183" width="1.2" height="4.3" fill="#B0B0B0"/>
<rect x="2164.27" y="183" width="1.2" height="4.3" fill="#B0B0B0"/>
<rect x="2175.76" y="183" width="1.2" height="4.3" fill="#B0B0B0"/>
<rect x="2187.26" y="183" width="1.2" height="7.2" fill="#A6A6A6"/>
<rect x="2198.76" y="183" width="1.2" height="4.3" fill="#B0B0B0"/>
<rect x="2210.25" y="183" width="1.2" height="4.3" fill="#B0B0B0"/>
<rect x="2221.75" y="183" width="1.2" height="4.3" fill="#B0B0B0"/>
<rect x="2233.24" y="183" width="1.2" height="4.3" fill="#B0B0B0"/>
<rect x="2244.74" y="183" width="1.3" height="19" fill="#9A9A9A"/>
<rect x="2256.24" y="183" width="1.2" height="4.3" fill="#B0B0B0"/>
<rect x="2267.73" y="183" width="1.2" height="4.3" fill="#B0B0B0"/>
<rect x="2279.23" y="183" width="1.2" height="4.3" fill="#B0B0B0"/>
<rect x="2290.72" y="183" width="1.2" height="4.3" fill="#B0B0B0"/>
<rect x="2302.22" y="183" width="1.2" height="7.2" fill="#A6A6A6"/>
<rect x="2313.72" y="183" width="1.2" height="4.3" fill="#B0B0B0"/>
<rect x="2325.21" y="183" width="1.2" height="4.3" fill="#B0B0B0"/>
<rect x="2336.71" y="183" width="1.2" height="4.3" fill="#B0B0B0"/>
<rect x="2348.20" y="183" width="1.2" height="4.3" fill="#B0B0B0"/>
<rect x="2359.70" y="183" width="1.3" height="19" fill="#9A9A9A"/>
<rect x="2371.20" y="183" width="1.2" height="4.3" fill="#B0B0B0"/>
<rect x="2382.69" y="183" width="1.2" height="4.3" fill="#B0B0B0"/>
<rect x="2394.19" y="183" width="1.2" height="4.3" fill="#B0B0B0"/>
<rect x="2405.68" y="183" width="1.2" height="4.3" fill="#B0B0B0"/>
<rect x="2417.18" y="183" width="1.2" height="7.2" fill="#A6A6A6"/>
<rect x="2428.68" y="183" width="1.2" height="4.3" fill="#B0B0B0"/>
<rect x="2440.17" y="183" width="1.2" height="4.3" fill="#B0B0B0"/>
<rect x="2451.67" y="183" width="1.2" height="4.3" fill="#B0B0B0"/>
<rect x="2463.16" y="183" width="1.2" height="4.3" fill="#B0B0B0"/>
<rect x="2474.66" y="183" width="1.3" height="19" fill="#9A9A9A"/>
<rect x="2486.16" y="183" width="1.2" height="4.3" fill="#B0B0B0"/>
<rect x="2497.65" y="183" width="1.2" height="4.3" fill="#B0B0B0"/>
<rect x="2509.15" y="183" width="1.2" height="4.3" fill="#B0B0B0"/>
<rect x="2520.64" y="183" width="1.2" height="4.3" fill="#B0B0B0"/>
<rect x="2532.14" y="183" width="1.2" height="7.2" fill="#A6A6A6"/>
<text x="66.30" y="206" font-size="15" fill="#2E2E2E" font-family="Liberation Sans">0</text>
<text x="181.26" y="206" font-size="15" fill="#2E2E2E" font-family="Liberation Sans">1</text>
<text x="296.22" y="206" font-size="15" fill="#2E2E2E" font-family="Liberation Sans">2</text>
<text x="411.18" y="206" font-size="15" fill="#2E2E2E" font-family="Liberation Sans">3</text>
<text x="526.14" y="206" font-size="15" fill="#2E2E2E" font-family="Liberation Sans">4</text>
<text x="641.10" y="206" font-size="15" fill="#2E2E2E" font-family="Liberation Sans">5</text>
<text x="756.06" y="206" font-size="15" fill="#2E2E2E" font-family="Liberation Sans">6</text>
<text x="871.02" y="206" font-size="15" fill="#2E2E2E" font-family="Liberation Sans">7</text>
<text x="985.98" y="206" font-size="15" fill="#2E2E2E" font-family="Liberation Sans">8</text>
<text x="1100.94" y="206" font-size="15" fill="#2E2E2E" font-family="Liberation Sans">9</text>
<text x="1215.90" y="206" font-size="15" fill="#2E2E2E" font-family="Liberation Sans">10</text>
<text x="1330.86" y="206" font-size="15" fill="#2E2E2E" font-family="Liberation Sans">11</text>
<text x="1445.82" y="206" font-size="15" fill="#2E2E2E" font-family="Liberation Sans">12</text>
<text x="1560.78" y="206" font-size="15" fill="#2E2E2E" font-family="Liberation Sans">13</text>
<text x="1675.74" y="206" font-size="15" fill="#2E2E2E" font-family="Liberation Sans">14</text>
<text x="1790.70" y="206" font-size="15" fill="#2E2E2E" font-family="Liberation Sans">15</text>
<text x="1905.66" y="206" font-size="15" fill="#2E2E2E" font-family="Liberation Sans">16</text>
<text x="2020.62" y="206" font-size="15" fill="#2E2E2E" font-family="Liberation Sans">17</text>
<text x="2135.58" y="206" font-size="15" fill="#2E2E2E" font-family="Liberation Sans">18</text>
<text x="2250.54" y="206" font-size="15" fill="#2E2E2E" font-family="Liberation Sans">19</text>
<text x="2365.50" y="206" font-size="15" fill="#2E2E2E" font-family="Liberation Sans">20</text>
<text x="2480.46" y="206" font-size="15" fill="#2E2E2E" font-family="Liberation Sans">21</text>
<path d="M258.2,162.3 H273.6 V175.5 L265.9,182.8 L258.2,175.5 Z" fill="#6FA8E8" stroke="#3A6BA6" stroke-width="1.1"/>
<rect x="259.5" y="164" width="12.8" height="3.2" fill="#A9CDF4"/>
<path d="M258.6,168.6 H273.2 M265.9,168.6 V181" stroke="#3A6BA6" stroke-width="1"/>
<path d="M2252.4,169.2 H2268.2 V172.4 L2260.3,182.6 L2252.4,172.4 Z" fill="#7DB3EC" stroke="#3A6BA6" stroke-width="1.1"/>
</svg>
<div id="sb"><div id="sbthumb"></div><div id="sbarrows"></div>
<svg class="abs" style="left:0;top:0" width="27" height="1355" viewBox="2533 213 27 1355"><path d="M2542.5,1528 L2546.5,1522 L2550.5,1528" fill="none" stroke="#707070" stroke-width="1.6"/><path d="M2542.5,1548 L2546.5,1554 L2550.5,1548" fill="none" stroke="#707070" stroke-width="1.6"/></svg>
</div>
<div id="status">
<div class="abs" style="left:12px;top:0;font-size:20px;line-height:32px;color:#2B2B2B;top:-0.5px">228%</div>
<div class="abs" style="left:76.5px;top:1582.5px;top:14.5px;width:324px;height:5px;border-radius:3px;background:#BEBEBE"></div>
<div class="abs" style="left:76.5px;top:14.5px;width:182px;height:5px;border-radius:3px;background:#1A80F2"></div>
<div class="abs" style="left:246px;top:7px;width:20px;height:20px;border-radius:50%;background:#fff;box-shadow:0 0.5px 2px rgba(0,0,0,0.35)"></div>
<div class="abs" style="left:416px;top:0;width:1px;height:32px;background:#BDBDBD"></div>
<div class="abs" style="left:1256px;top:-0.5px;font-size:20px;line-height:32px;color:#2B2B2B;white-space:pre;word-spacing:0.6px">Words: 104  Chars: 709  Page: 1 of 1</div>
</div>

</body></html>
